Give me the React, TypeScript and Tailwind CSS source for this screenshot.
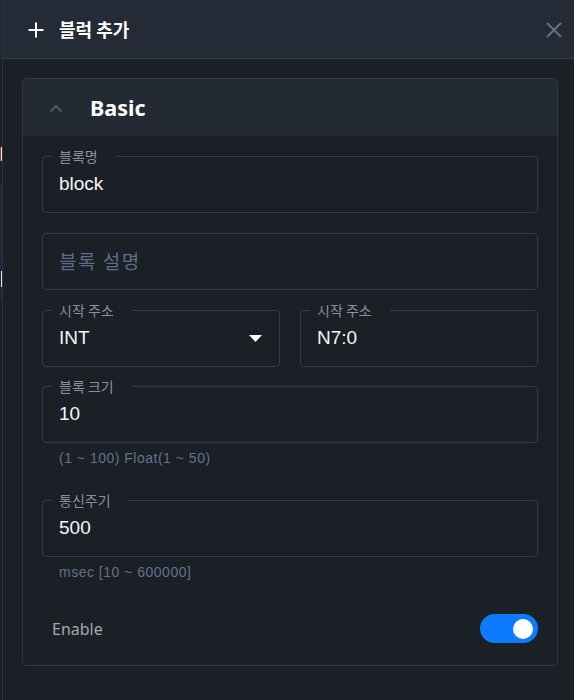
import React from "react";

const KR = '"Noto Sans CJK KR", "Noto Sans", sans-serif';
const ARIAL = '"Liberation Sans", "Noto Sans CJK KR", Arial, sans-serif';

function Field({
  label,
  value,
  placeholder,
  dropdown,
}: {
  label?: string;
  value?: string;
  placeholder?: string;
  dropdown?: boolean;
}) {
  return (
    <div className="relative h-[57px] rounded-[4px] border border-[#363c47] flex items-center pl-[16px] pr-[17px]">
      {label && (
        <span
          className="absolute left-[9px] top-[-9px] pl-[7px] pr-[18px] bg-[#1b1f26] text-[14px] leading-[16px] text-[#8a9099]"
          style={{ fontFamily: KR }}
        >
          {label}
        </span>
      )}
      {value ? (
        <span className="flex-1 text-[19px] text-[#f4f6f8]" style={{ fontFamily: ARIAL }}>
          {value}
        </span>
      ) : (
        <span
          className="flex-1 text-[19px] tracking-[1.5px] text-[#5c6e86]"
          style={{ fontFamily: KR }}
        >
          {placeholder}
        </span>
      )}
      {dropdown && (
        <svg width="13" height="7" viewBox="0 0 13 7" className="shrink-0">
          <path d="M0 0 L13 0 L6.5 7 Z" fill="#ffffff" />
        </svg>
      )}
    </div>
  );
}

function Helper({ children }: { children: React.ReactNode }) {
  return (
    <div
      className="pl-[17px] text-[14px] leading-[16px] tracking-[0.5px] text-[#60738c]"
      style={{ fontFamily: ARIAL }}
    >
      {children}
    </div>
  );
}

export default function App() {
  return (
    <div className="flex w-[574px] h-[700px] overflow-hidden bg-[#1b1f26]">
      {/* peek of page behind the dialog */}
      <div className="w-[2px] flex flex-col shrink-0 bg-[#1c2029]">
        <div className="h-[59px] bg-[#242a34]" />
        <div className="h-[88px]" />
        <div className="h-[14px] flex">
          <div className="w-[1px] bg-[#a03232]" />
          <div className="w-[1px] bg-[#e8e8e8]" />
        </div>
        <div className="h-[23px]" />
        <div className="h-[66px] bg-[#262a35]" />
        <div className="h-[21px] bg-[#1b2740]" />
        <div className="h-[16px] flex bg-[#1b2740]">
          <div className="w-[1px]" />
          <div className="w-[1px] bg-[#e8e8e8]" />
        </div>
        <div className="h-[13px] bg-[#1b2740]" />
      </div>

      {/* dialog */}
      <div className="flex-1 flex flex-col border-l border-[#2c323c] bg-[#1b1f26]">
        {/* header */}
        <div className="h-[59px] shrink-0 flex items-center bg-[#252b36] border-b border-[#363d4a] pl-[24px] pr-[11px] pt-[1px]">
          <svg width="18" height="18" viewBox="0 0 18 18" className="shrink-0">
            <path d="M9 1.5 V16.5 M1.5 9 H16.5" stroke="#ffffff" strokeWidth="2" />
          </svg>
          <span
            className="ml-[14px] flex-1 text-[18px] font-bold text-white"
            style={{ fontFamily: KR }}
          >
            블럭 추가
          </span>
          <svg width="18" height="18" viewBox="0 0 18 18" className="shrink-0">
            <path d="M2 2 L16 16 M16 2 L2 16" stroke="#66707f" strokeWidth="2" />
          </svg>
        </div>

        {/* body */}
        <div className="pl-[19px] pr-[16px] pt-[19px]">
          <div className="rounded-[4px] border border-[#313743] overflow-hidden">
            <div className="h-[57px] flex items-center bg-[#242a34] pl-[26px] pt-[2px]">
              <svg width="14" height="9" viewBox="0 0 14 9" className="shrink-0">
                <path d="M1.5 7.5 L7 2 L12.5 7.5" stroke="#4f5866" strokeWidth="2" fill="none" />
              </svg>
              <span
                className="ml-[27px] text-[21.5px] font-bold text-white"
                style={{ fontFamily: '"Noto Sans", sans-serif' }}
              >
                Basic
              </span>
            </div>

            <div className="px-[19px] pt-[20px] pb-[22px] flex flex-col">
              <Field label="블록명" value="block" />
              <div className="mt-[20px]">
                <Field placeholder="블록 설명" />
              </div>
              <div className="mt-[20px] grid grid-cols-2 gap-[20px]">
                <Field label="시작 주소" value="INT" dropdown />
                <Field label="시작 주소" value="N7:0" />
              </div>
              <div className="mt-[19px]">
                <Field label="블록 크기" value="10" />
              </div>
              <div className="mt-[7px]">
                <Helper>(1 ~ 100) Float(1 ~ 50)</Helper>
              </div>
              <div className="mt-[34px]">
                <Field label="통신주기" value="500" />
              </div>
              <div className="mt-[7px]">
                <Helper>msec [10 ~ 600000]</Helper>
              </div>
              <div className="mt-[34px] flex items-center justify-between pl-[10px]">
                <span
                  className="text-[16px] text-[#a4a8ae]"
                  style={{ fontFamily: '"Noto Sans", sans-serif' }}
                >
                  Enable
                </span>
                <div className="w-[58px] h-[29px] rounded-full bg-[#0d7bff] flex items-center justify-end pr-[5px]">
                  <div className="w-[20px] h-[20px] rounded-full bg-white" />
                </div>
              </div>
            </div>
          </div>
        </div>
      </div>
    </div>
  );
}
